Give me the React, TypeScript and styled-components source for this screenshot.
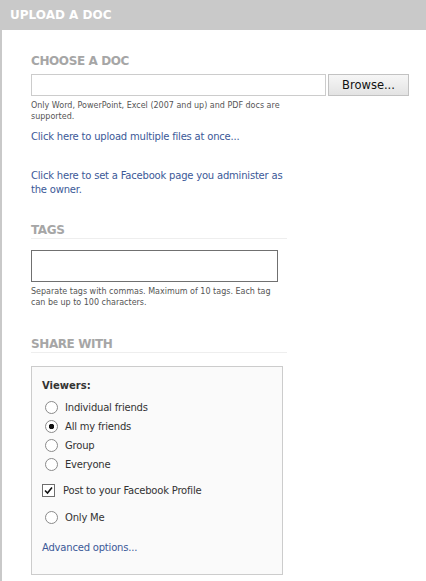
import styled, { createGlobalStyle } from 'styled-components';

const GlobalStyle = createGlobalStyle`
    html, body {
        margin: 0;
        padding: 0;
        background: #ffffff;
    }
    body {
        font-family: "DejaVu Sans", Tahoma, sans-serif;
        font-size: 11px;
        color: #333333;
    }
`;

const Panel = styled.div`
    width: 426px;
    min-height: 581px;
    display: flex;
    flex-direction: column;
`;

const Header = styled.div`
    height: 30px;
    background: #c9c9c9;
    display: flex;
    align-items: center;
    padding-left: 10px;
    color: #ffffff;
    font-weight: bold;
    font-size: 12px;
`;

const Body = styled.div`
    flex: 1;
    border-left: 2px solid #c9c9c9;
    padding: 24px 0 8px 29px;
`;

const SectionTitle = styled.h2<{ $lined?: boolean }>`
    margin: 0;
    width: 256px;
    font-size: 12px;
    font-weight: bold;
    color: #a6a6a6;
    letter-spacing: -0.4px;
    line-height: 14px;
    padding-bottom: 1px;
    border-bottom: 1px solid ${p => (p.$lined ? '#eeeeee' : 'transparent')};
`;

const FileRow = styled.div`
    display: flex;
    gap: 2px;
    margin-top: 4px;
`;

const FileField = styled.div`
    width: 293px;
    height: 20px;
    border: 1px solid #cccccc;
    background: #ffffff;
`;

const BrowseButton = styled.button`
    width: 81px;
    height: 22px;
    border: 1px solid #c2c2c2;
    background: linear-gradient(#f6f6f6, #e3e3e3);
    font-family: "DejaVu Sans", Tahoma, sans-serif;
    font-size: 11.5px;
    color: #111111;
    padding: 0;
`;

const Hint = styled.p<{ $width: number }>`
    margin: 4px 0 0;
    width: ${p => p.$width}px;
    font-size: 8px;
    line-height: 11px;
    color: #555555;
`;

const Link = styled.a<{ $top: number }>`
    display: block;
    margin-top: ${p => p.$top}px;
    width: 270px;
    color: #3b5998;
    text-decoration: none;
    font-size: 10px;
    letter-spacing: -0.2px;
    line-height: 14px;
`;

const Section = styled.div<{ $top: number }>`
    margin-top: ${p => p.$top}px;
`;

const TagsField = styled.div`
    margin-top: 11px;
    width: 245px;
    height: 30px;
    border: 1px solid #707070;
    background: #ffffff;
`;

const ViewersBox = styled.div`
    margin-top: 13px;
    width: 230px;
    border: 1px solid #cccccc;
    background: #fafafa;
    padding: 13px 10px 21px 10px;
`;

const ViewersLabel = styled.div`
    font-weight: bold;
    font-size: 10px;
    color: #333333;
    margin-bottom: 7px;
`;

const Option = styled.label<{ $gap?: number }>`
    display: flex;
    align-items: center;
    height: 19px;
    margin-top: ${p => p.$gap ?? 0}px;
    font-size: 10px;
    letter-spacing: -0.2px;
    color: #333333;
    gap: 7px;
    padding-left: 3px;
`;

const CheckOption = styled(Option)`
    padding-left: 0;
    gap: 8px;
`;

const Radio = styled.span<{ $on?: boolean }>`
    width: 11px;
    height: 11px;
    border-radius: 50%;
    border: 1px solid #8a8a8a;
    background: radial-gradient(circle, ${p => (p.$on ? '#111111 0 2.5px, ' : '')}#ffffff 3px);
    flex: none;
`;

const Check = styled.span`
    width: 11px;
    height: 11px;
    border: 1px solid #6e6e6e;
    background: #ffffff;
    display: flex;
    align-items: center;
    justify-content: center;
    flex: none;
`;

const AdvLink = styled.a`
    display: block;
    margin-top: 15px;
    color: #3b5998;
    font-size: 10px;
    letter-spacing: -0.2px;
    text-decoration: none;
`;

const viewers = [
    { label: 'Individual friends', on: false },
    { label: 'All my friends', on: true },
    { label: 'Group', on: false },
    { label: 'Everyone', on: false }
];

export default function App() {
    return (
        <Panel>
            <GlobalStyle />
            <Header>UPLOAD A DOC</Header>
            <Body>
                <SectionTitle>CHOOSE A DOC</SectionTitle>
                <FileRow>
                    <FileField />
                    <BrowseButton>Browse...</BrowseButton>
                </FileRow>
                <Hint $width={270}>
                    Only Word, PowerPoint, Excel (2007 and up) and PDF docs are supported.
                </Hint>
                <Link $top={8}>Click here to upload multiple files at once...</Link>
                <Link $top={25}>Click here to set a Facebook page you administer as the owner.</Link>

                <Section $top={26}>
                    <SectionTitle $lined>TAGS</SectionTitle>
                    <TagsField />
                    <Hint $width={250}>
                        Separate tags with commas. Maximum of 10 tags. Each tag can be up to 100
                        characters.
                    </Hint>
                </Section>

                <Section $top={29}>
                    <SectionTitle $lined>SHARE WITH</SectionTitle>
                    <ViewersBox>
                        <ViewersLabel>Viewers:</ViewersLabel>
                        {viewers.map(v => (
                            <Option key={v.label}>
                                <Radio $on={v.on} />
                                {v.label}
                            </Option>
                        ))}
                        <CheckOption $gap={7}>
                            <Check>
                                <svg width="9" height="9" viewBox="0 0 9 9">
                                    <path d="M1 4.5 L3.5 7 L8 1.5" fill="none" stroke="#111" strokeWidth="1.6" />
                                </svg>
                            </Check>
                            Post to your Facebook Profile
                        </CheckOption>
                        <Option $gap={8}>
                            <Radio />
                            Only Me
                        </Option>
                        <AdvLink>Advanced options...</AdvLink>
                    </ViewersBox>
                </Section>
            </Body>
        </Panel>
    );
}
